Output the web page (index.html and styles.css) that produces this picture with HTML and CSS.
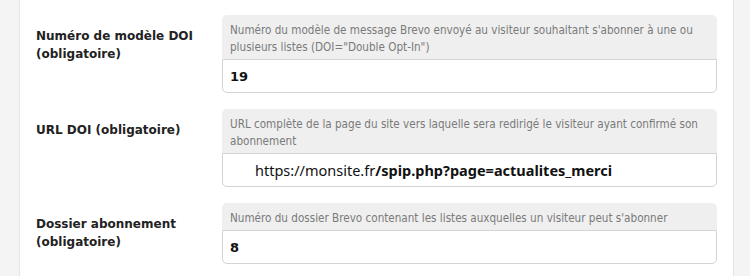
FILE: index.html
```html
<!DOCTYPE html>
<html lang="fr">
<head>
  <meta charset="UTF-8">
  <title>Configuration Brevo</title>
  <link rel="stylesheet" href="styles.css">
</head>
<body>
  <div class="page">
    <form class="config-form">

      <div class="row">
        <label class="row-label" for="doi_template">Numéro de modèle DOI (obligatoire)</label>
        <div class="row-field">
          <p class="help">Numéro du modèle de message Brevo envoyé au visiteur souhaitant s'abonner à une ou plusieurs listes (DOI="Double Opt-In")</p>
          <input type="text" class="field-input" id="doi_template" value="19">
        </div>
      </div>

      <div class="row">
        <label class="row-label" for="doi_url">URL DOI (obligatoire)</label>
        <div class="row-field">
          <p class="help">URL complète de la page du site vers laquelle sera redirigé le visiteur ayant confirmé son abonnement</p>
          <div class="field-input field-url" id="doi_url">https://monsite.fr<b>/spip.php?page=actualites_merci</b></div>
        </div>
      </div>

      <div class="row">
        <label class="row-label" for="folder">Dossier abonnement (obligatoire)</label>
        <div class="row-field">
          <p class="help">Numéro du dossier Brevo contenant les listes auxquelles un visiteur peut s'abonner</p>
          <input type="text" class="field-input" id="folder" value="8">
        </div>
      </div>

    </form>
  </div>
</body>
</html>
```

FILE: styles.css
```css
  body {
      background-color: #f4f4f4;
      font-family: 'DejaVu Sans', sans-serif;
      margin: 0;
      padding: 0;
  }

  .page {
    background-color: white;
    border-left: 1px solid #e3e3e3;
    border-right: 1px solid #e3e3e3;
    margin: 0 16px 0 19px;
    min-height: 100vh;
    padding-top: 15px;
    box-sizing: border-box;
  }

  .row {
    display: grid;
    grid-template-columns: 186px 495px;
    padding-left: 16px;
    margin-bottom: 16px;
  }

  .row-label {
    font-weight: bold;
    font-size: 12px;
    line-height: 18px;
    color: #222;
    padding-top: 12px;
    padding-right: 20px;
  }

  .help {
    margin: 0;
    background-color: #efefef;
    border-radius: 5px 5px 0 0;
    padding: 7px 8px 3px 8px;
    font-family: 'DejaVu Sans Condensed', 'DejaVu Sans', sans-serif;
    font-size: 11.6px;
    line-height: 17px;
    color: #7a7a7a;
  }

  .field-input {
    display: block;
    width: 100%;
    height: 34px;
    box-sizing: border-box;
    margin: 0;
    padding: 0 7px;
    border: 1px solid #d3d3d3;
    border-radius: 0 0 5px 5px;
    background: white;
    font-family: 'DejaVu Sans', sans-serif;
    font-weight: bold;
    font-size: 13px;
    color: #111;
    outline: none;
  }

  .field-url {
    line-height: 32px;
    padding-left: 32px;
    font-family: 'Noto Sans', sans-serif;
    font-weight: normal;
    font-size: 14.5px;
    color: #111;
  }

  .field-url b {
    font-weight: bold;
  }
```
